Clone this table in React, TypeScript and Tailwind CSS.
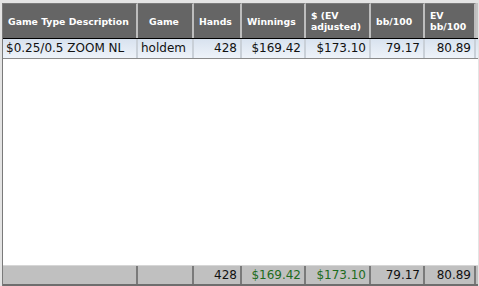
import React from "react";

const cols = [
  { key: "desc", label: ["Game Type Description"], w: "w-[135px]", align: "text-left" },
  { key: "game", label: ["Game"], w: "w-[56px]", align: "text-left" },
  { key: "hands", label: ["Hands"], w: "w-[48px]", align: "text-right" },
  { key: "win", label: ["Winnings"], w: "w-[64px]", align: "text-right" },
  { key: "ev", label: ["$ (EV", "adjusted)"], w: "w-[65px]", align: "text-right" },
  { key: "bb", label: ["bb/100"], w: "w-[54px]", align: "text-right" },
  { key: "evbb", label: ["EV", "bb/100"], w: "w-[51px]", align: "text-right" },
];

const row: Record<string, string> = {
  desc: "$0.25/0.5 ZOOM NL",
  game: "holdem",
  hands: "428",
  win: "$169.42",
  ev: "$173.10",
  bb: "79.17",
  evbb: "80.89",
};

const totals: Record<string, string> = {
  desc: "",
  game: "",
  hands: "428",
  win: "$169.42",
  ev: "$173.10",
  bb: "79.17",
  evbb: "80.89",
};

const green = ["win", "ev"];

export default function App() {
  return (
    <div
      className="w-[479px] h-[286px] bg-[#e4e4e4] pl-[2px] pt-[3px] overflow-hidden"
      style={{ fontFamily: '"DejaVu Sans", Verdana, sans-serif' }}
    >
      <div className="flex flex-col h-[283px] bg-white border-l border-[#7a7a7a] w-[476px]">
        {/* header */}
        <div className="flex h-[36px] bg-[#c4c4c4] border-b border-black">
          {cols.map((c) => (
            <div
              key={c.key}
              className={`${c.w} shrink-0 h-full border-r-2 border-[#bdbdbd] bg-[#656565] border-t border-t-[#7c7c7c] flex flex-col justify-center pl-[5px] ${c.key === "game" ? "pl-[11px]" : ""} text-white font-bold text-[9.3px] leading-[11px]`}
            >
              {c.label.map((l) => (
                <span key={l} className="whitespace-nowrap">{l}</span>
              ))}
            </div>
          ))}
        </div>
        {/* data row */}
        <div className="flex h-[20px] border-b border-[#8a8a8a] bg-gradient-to-b from-[#d8e2ef] to-[#eef3f9]">
          {cols.map((c) => (
            <div
              key={c.key}
              className={`${c.w} shrink-0 h-full border-r-2 border-[#c9d0d8] px-[3px] ${c.align} text-[12px] leading-[19px] text-[#111] whitespace-nowrap`}
            >
              {row[c.key]}
            </div>
          ))}
        </div>
        <div className="flex-1" />
        {/* totals */}
        <div className="flex h-[21px] bg-[#c0c0c0] border-t border-[#d6d6d6] border-b-2 border-b-[#6e6e6e]">
          {cols.map((c) => (
            <div
              key={c.key}
              className={`${c.w} shrink-0 h-full border-r-2 border-[#7a7a7a] px-[3px] ${c.align} text-[12px] leading-[19px] whitespace-nowrap ${green.includes(c.key) ? "text-[#1d6b1d]" : "text-[#111]"}`}
            >
              {totals[c.key]}
            </div>
          ))}
        </div>
      </div>
    </div>
  );
}
